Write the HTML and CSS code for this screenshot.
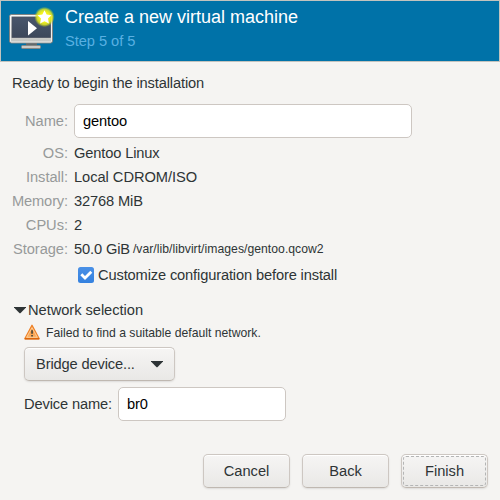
FILE: index.html
```html
<!DOCTYPE html>
<html lang="en">
<head>
<meta charset="utf-8">
<title>New VM</title>
<link rel="stylesheet" href="styles.css">
</head>
<body>
<header class="banner">
  <svg class="banner-icon" width="48" height="48" viewBox="0 0 48 48">
    <defs>
      <linearGradient id="frame" x1="0" y1="0" x2="0" y2="1"><stop offset="0" stop-color="#f4f4f2"/><stop offset="1" stop-color="#c0c2bf"/></linearGradient>
      <linearGradient id="screen" x1="0" y1="0" x2="0" y2="1"><stop offset="0" stop-color="#48566c"/><stop offset="1" stop-color="#3d485b"/></linearGradient>
      <radialGradient id="glow"><stop offset="0.5" stop-color="#f2f21c"/><stop offset="0.75" stop-color="#e2e820" stop-opacity=".85"/><stop offset="1" stop-color="#c0d824" stop-opacity="0"/></radialGradient>
    </defs>
    <rect x="17" y="36" width="11" height="4" fill="#62696c"/>
    <rect x="12.500" y="39.500" width="19" height="3" rx="1" fill="#c9cac8" stroke="#858885"/>
    <rect x="0.500" y="8.500" width="43" height="28.500" rx="2" fill="url(#frame)" stroke="#808483"/>
    <rect x="1.500" y="9.500" width="41" height="26.500" rx="1" fill="none" stroke="#f7f7f6" stroke-opacity=".8"/>
    <rect x="3" y="11" width="38.500" height="20.500" fill="url(#screen)" stroke="#4b5361" stroke-width=".8"/>
    <path d="M19 15v14.500l9-7.250z" fill="#fff"/>
    <circle cx="35.500" cy="11" r="10.200" fill="url(#glow)"/>
    <path d="M35.500 4.200l2.200 4.300 4.800.7-3.500 3.400.9 4.900-4.400-2.300-4.400 2.300.9-4.900-3.500-3.400 4.800-.7z" fill="#fff"/>
  </svg>
  <div class="banner-text">
    <h1 class="title">Create a new virtual machine</h1>
    <div class="step">Step 5 of 5</div>
  </div>
</header>
<main class="page">
  <p class="ready">Ready to begin the installation</p>
  <div class="summary">
    <label class="key" for="name">Name:</label><input id="name" class="entry name-entry" value="gentoo">
    <span class="key">OS:</span><span>Gentoo Linux</span>
    <span class="key">Install:</span><span class="loose">Local CDROM/ISO</span>
    <span class="key tight">Memory:</span><span>32768 MiB</span>
    <span class="key">CPUs:</span><span>2</span>
    <span class="key">Storage:</span><span class="storage"><span>50.0 GiB</span><span class="small path">/var/lib/libvirt/images/gentoo.qcow2</span></span>
  </div>
  <div class="customize">
    <svg width="16" height="16" viewBox="0 0 16 16">
      <defs><linearGradient id="check" x1="0" y1="0" x2="0" y2="1"><stop offset="0" stop-color="#4a90e6"/><stop offset="1" stop-color="#3481df"/></linearGradient></defs>
      <rect width="16" height="16" rx="2.500" fill="url(#check)"/>
      <path d="M3.300 7.300l3.700 3.700 6.300-6.300" fill="none" stroke="#fff" stroke-width="2.800"/>
    </svg>
    <span>Customize configuration before install</span>
  </div>
  <div class="expander">
    <svg width="12" height="7" viewBox="0 0 12 7"><path d="M0 0h12v.6L6.400 6.200h-.8L0 .6z" fill="#2e3436"/></svg>
    <span class="loose">Network selection</span>
  </div>
  <div class="network">
    <div class="warning">
      <svg width="16" height="16" viewBox="0 0 16 16">
        <defs><linearGradient id="warn" x1="0" y1="0" x2="0" y2="1"><stop offset="0" stop-color="#f68a2a"/><stop offset="1" stop-color="#fcb469"/></linearGradient></defs>
        <path d="M8 1.200L15.200 14.700H.8z" fill="url(#warn)" stroke="#ee8128" stroke-width="1.300" stroke-linejoin="round"/>
        <path d="M.8 14.900h14.400" stroke="#d65c00" stroke-width="1.300"/>
        <path d="M8 3.600L13.300 13.300H2.700z" fill="none" stroke="#fcd09c" stroke-width=".9"/>
        <path d="M7.200 6.200h1.700v3.600H7.200zM7.200 11h1.700v1.400H7.200z" fill="#4a4a3c"/>
      </svg>
      <span class="small">Failed to find a suitable default network.</span>
    </div>
    <button class="button combo"><span>Bridge device...</span><svg width="12" height="7" viewBox="0 0 12 7"><path d="M0 0h12v.6L6.400 6.200h-.8L0 .6z" fill="#2e3436"/></svg></button>
    <div class="device"><label class="device-label" for="device">Device name:</label><input id="device" class="entry device-entry" value="br0"></div>
  </div>
</main>
<footer class="actions">
  <button class="button">Cancel</button>
  <button class="button">Back</button>
  <button class="button focused">Finish</button>
</footer>
</body>
</html>
```
FILE: styles.css
```css
* { box-sizing: border-box; }
body {
  margin: 0;
  width: 500px;
  height: 500px;
  display: flex;
  flex-direction: column;
  overflow: hidden;
  background: #f5f4f2;
  color: #2e3436;
  font: 14.667px/18px "Liberation Sans", sans-serif;
  letter-spacing: -0.14px;
  white-space: nowrap;
}
svg { display: block; flex: none; }
.banner {
  flex: none;
  display: flex;
  height: 62px;
  padding: 5px 8px;
  border: 1px solid #c3c3be;
  background: #0072a8;
}
.banner-icon { width: 48px; }
.banner-text { margin-left: 8px; letter-spacing: 0; }
.title {
  margin: 0;
  font-size: 18px;
  line-height: 22px;
  font-weight: 400;
  color: #fff;
}
.step { margin-top: 4px; letter-spacing: -0.05px; color: #59b0e2; }
.page { padding: 12px 12px 0; flex: 1; }
.ready { margin: 0 0 12px; }
.summary {
  display: grid;
  grid-template-columns: 56px 1fr;
  column-gap: 6px;
  row-gap: 6px;
  align-items: center;
}
.key { display: flex; justify-content: flex-end; letter-spacing: -0.04px; color: #979a9a; }
.tight { letter-spacing: -0.14px; }
.loose { letter-spacing: -0.04px; }
.entry {
  height: 34px;
  padding: 0 8px;
  border: 1px solid #cdc7c2;
  border-radius: 5px;
  background: #fff;
  color: #000;
  font: inherit;
  letter-spacing: -0.14px;
  outline: 0;
}
.name-entry { width: 338px; }
.small { font-size: 12.2px; letter-spacing: 0; }
.path { letter-spacing: 0.03px; }
.storage { display: flex; gap: 3px; }
.customize { display: flex; align-items: center; gap: 4px; margin: 8px 0 0 66px; }
.expander { display: flex; align-items: center; gap: 2px; margin: 17px 0 0 2px; }
.network { margin-left: 12px; }
.warning { display: flex; align-items: center; gap: 6px; height: 16px; margin: 5px 0 7px; }
.warning .small { padding-top: 2px; }
.button {
  height: 34px;
  width: 87px;
  padding: 0;
  border: 1px solid #cdc7c2;
  border-bottom-color: #bfb8b1;
  border-radius: 5px;
  background: linear-gradient(#f6f5f4, #e9e8e6);
  box-shadow: inset 0 1px #fff, 0 1px 2px rgba(0, 0, 0, .1);
  color: #2e3436;
  font: inherit;
}
.combo {
  display: flex;
  align-items: center;
  justify-content: space-between;
  width: 151px;
  padding: 0 11px;
  letter-spacing: -0.14px;
}
.device { display: flex; align-items: center; margin-top: 6px; }
.device-label { width: 94px; }
.device-entry { width: 168px; }
.actions { display: flex; justify-content: flex-end; gap: 12px; padding: 0 12px 12px; }
.focused { outline: 1px dashed #b4b5b5; outline-offset: -3px; }
```
